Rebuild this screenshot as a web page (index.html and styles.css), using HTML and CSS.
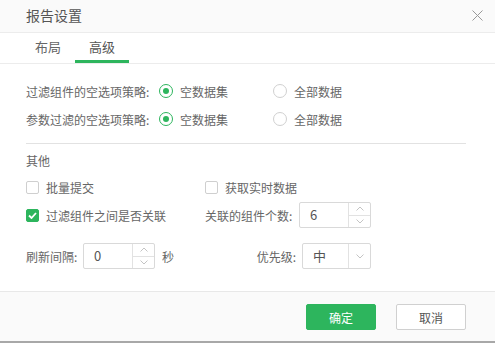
FILE: index.html
```html
<!DOCTYPE html>
<html lang="zh">
<head>
<meta charset="utf-8">
<link rel="stylesheet" href="styles.css">
</head>
<body>
<div class="dialog">
  <div class="header">
    <span class="title">报告设置</span>
    <svg class="close" width="11" height="11" viewBox="0 0 11 11"><path d="M0.5 0.5L10.5 10.5M10.5 0.5L0.5 10.5" stroke="#999" stroke-width="1" fill="none"/></svg>
  </div>
  <div class="tabs">
    <div class="tab">布局</div>
    <div class="tab active">高级</div>
  </div>
  <div class="body">
    <div class="row">
      <span class="label">过滤组件的空选项策略:</span>
      <span class="option"><span class="radio on"></span>空数据集</span>
      <span class="option"><span class="radio"></span>全部数据</span>
    </div>
    <div class="row">
      <span class="label">参数过滤的空选项策略:</span>
      <span class="option"><span class="radio on"></span>空数据集</span>
      <span class="option"><span class="radio"></span>全部数据</span>
    </div>
    <div class="divider"></div>
    <div class="section">其他</div>
    <div class="row">
      <span class="col1"><span class="check"></span>批量提交</span>
      <span class="col2"><span class="check"></span>获取实时数据</span>
    </div>
    <div class="row">
      <span class="col1"><span class="check on"><svg width="9" height="7" viewBox="0 0 9 7"><path d="M1 3.5L3.5 6L8 1" stroke="#fff" stroke-width="1.8" fill="none"/></svg></span>过滤组件之间是否关联</span>
      <span class="col2"><span class="lbl2">关联的组件个数:</span>
        <span class="spin"><span class="val">6</span><span class="arrows"><span class="arr"><svg width="8" height="5" viewBox="0 0 8 5"><path d="M0.5 4.5L4 1L7.5 4.5" stroke="#c4c4c4" fill="none"/></svg></span><span class="arr"><svg width="8" height="5" viewBox="0 0 8 5"><path d="M0.5 0.5L4 4L7.5 0.5" stroke="#c4c4c4" fill="none"/></svg></span></span></span>
      </span>
    </div>
    <div class="row last">
      <span class="col1"><span class="lbl3">刷新间隔:</span>
        <span class="spin"><span class="val">0</span><span class="arrows"><span class="arr"><svg width="8" height="5" viewBox="0 0 8 5"><path d="M0.5 4.5L4 1L7.5 4.5" stroke="#c4c4c4" fill="none"/></svg></span><span class="arr"><svg width="8" height="5" viewBox="0 0 8 5"><path d="M0.5 0.5L4 4L7.5 0.5" stroke="#c4c4c4" fill="none"/></svg></span></span></span>
        <span class="unit">秒</span>
      </span>
      <span class="col2"><span class="lbl4">优先级:</span>
        <span class="select"><span class="val">中</span><span class="drop"><svg width="8" height="5" viewBox="0 0 8 5"><path d="M0.5 0.5L4 4L7.5 0.5" stroke="#c4c4c4" fill="none"/></svg></span></span>
      </span>
    </div>
  </div>
  <div class="footer">
    <button class="btn primary">确定</button>
    <button class="btn">取消</button>
  </div>
</div>
</body>
</html>
```
FILE: styles.css
```css
* { box-sizing: border-box; }
html, body { margin: 0; padding: 0; background: #fff; }
body {
  font-family: "Noto Sans CJK SC", "Noto Sans", sans-serif;
  font-size: 12px;
  color: #666;
}
.dialog {
  width: 495px;
  height: 343px;
  display: flex;
  flex-direction: column;
  border-bottom: 2px solid #a8a8a8;
}
.header {
  height: 33px;
  background: #fafafa;
  border-bottom: 1px solid #ececec;
  display: flex;
  align-items: center;
  justify-content: space-between;
  padding: 0 12px 2px 26px;
}
.title { font-size: 14px; color: #555; }
.close { display: block; }
.tabs {
  height: 31px;
  border-bottom: 1px solid #ececec;
  display: flex;
  padding-left: 21px;
}
.tab {
  width: 54px;
  text-align: center;
  font-size: 13px;
  color: #666;
  line-height: 27px;
  border-bottom: 3px solid transparent;
}
.tab.active { border-bottom-color: #2db55d; color: #555; }
.body {
  flex: 1;
  padding: 13px 29px 0 26px;
  display: flex;
  flex-direction: column;
}
.row {
  height: 28px;
  display: flex;
  align-items: center;
}
.label { width: 133px; }
.option { width: 114px; display: flex; align-items: center; }
.radio {
  width: 14px; height: 14px;
  border: 1px solid #d0d0d0;
  border-radius: 50%;
  margin-right: 7px;
  display: flex;
  align-items: center;
  justify-content: center;
}
.radio.on { border-color: #2db55d; }
.radio.on::after {
  content: "";
  width: 6px; height: 6px;
  border-radius: 50%;
  background: #2db55d;
}
.divider { height: 1px; background: #e2e2e2; margin-top: 10px; }
.section { height: 20px; line-height: 20px; margin-top: 7px; margin-bottom: 2px; }
.col1 { width: 179px; display: flex; align-items: center; }
.col2 { display: flex; align-items: center; }
.check {
  width: 13px; height: 13px;
  border: 1px solid #cfcfcf;
  border-radius: 2px;
  margin-right: 7px;
  display: flex;
  align-items: center;
  justify-content: center;
}
.check.on { background: #2db55d; border-color: #2db55d; }
.check svg { display: block; }
.lbl2 { width: 94px; }
.lbl3 { width: 57px; }
.lbl4 { width: 97px; text-align: right; padding-right: 6px; }
.spin, .select {
  height: 26px;
  border: 1px solid #d9d9d9;
  border-radius: 2px;
  display: flex;
  background: #fff;
}
.spin { width: 72px; }
.select { width: 69px; }
.val { flex: 1; padding-left: 10px; line-height: 24px; color: #555; font-size: 13px; }
.arrows {
  width: 22px;
  border-left: 1px solid #e2e2e2;
  display: flex;
  flex-direction: column;
}
.arr { flex: 1; display: flex; align-items: center; justify-content: center; }
.arr + .arr { border-top: 1px solid #e2e2e2; }
.arr svg, .drop svg { display: block; }
.drop {
  width: 22px;
  border-left: 1px solid #e2e2e2;
  display: flex;
  align-items: center;
  justify-content: center;
}
.unit { margin-left: 7px; }
.row.last { margin-top: 13px; }
.footer {
  height: 50px;
  background: #fafafa;
  border-top: 1px solid #e8e8e8;
  display: flex;
  justify-content: flex-end;
  align-items: flex-start;
  padding: 12px 29px 0 0;
  gap: 20px;
}
.btn {
  width: 70px; height: 26px;
  border: 1px solid #d0d0d0;
  border-radius: 2px;
  background: #fff;
  font-family: inherit;
  font-size: 12px;
  color: #555;
  padding: 0;
}
.btn.primary { background: #2db55d; border-color: #2db55d; color: #fff; }
```
